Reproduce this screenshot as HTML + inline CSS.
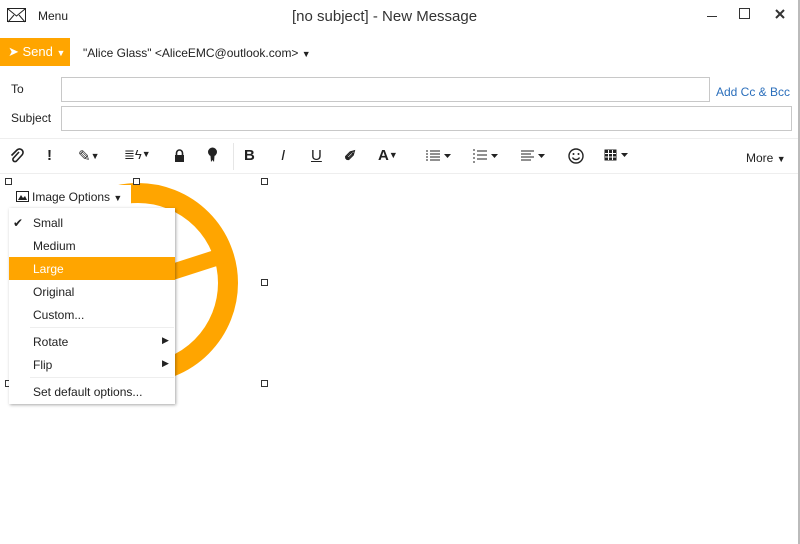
<!DOCTYPE html>
<html><head><style>
body{margin:0;width:800px;height:544px;background:#fff;font-family:"Liberation Sans",sans-serif;font-size:12px;color:#222;position:relative;overflow:hidden}
.a{position:absolute}
.inp{position:absolute;border:1px solid #c8c8c8;background:#fff}
.tb{position:absolute;top:147px;font-size:15px;font-weight:bold}
.mi{position:absolute;left:33px;font-size:12px}
.h{position:absolute;width:5px;height:5px;border:1px solid #333;background:#fff}
.dd{font-size:9px;font-weight:normal;vertical-align:2px}
</style></head><body>
<div class="a" style="right:0;top:0;width:2px;height:544px;background:#bbb"></div>
<svg class="a" style="left:7px;top:8px" width="20" height="15"><rect x="0.5" y="0.5" width="18" height="13" fill="none" stroke="#222"/><path d="M1 1L9.5 8L18 1M1 14L7 7M18 14L12 7" stroke="#222" fill="none"/></svg>
<div class="a" style="left:38px;top:9px;font-size:12px">Menu</div>
<div class="a" style="left:292px;top:8px;font-size:15px;color:#333">[no subject] - New Message</div>
<div class="a" style="left:707px;top:16px;width:10px;height:1px;background:#333"></div>
<div class="a" style="left:739px;top:8px;width:9px;height:9px;border:1px solid #333"></div>
<svg class="a" style="left:775px;top:9px" width="10" height="10"><path d="M1 1L9 9M9 1L1 9" stroke="#333" stroke-width="2"/></svg>
<div class="a" style="left:0;top:38px;width:70px;height:28px;background:#ffa500;color:#fff;font-size:13px;line-height:28px"><span style="margin-left:8px">➤ Send <span style="font-size:9px">▼</span></span></div>
<div class="a" style="left:83px;top:46px;font-size:12px">"Alice Glass" &lt;AliceEMC@outlook.com&gt; <span style="font-size:9px">▼</span></div>
<div class="a" style="left:11px;top:82px">To</div>
<div class="inp" style="left:61px;top:77px;width:647px;height:23px"></div>
<div class="a" style="left:716px;top:85px;color:#2a6ebb">Add Cc &amp; Bcc</div>
<div class="a" style="left:11px;top:111px">Subject</div>
<div class="inp" style="left:61px;top:106px;width:729px;height:23px"></div>
<div class="a" style="left:0;top:138px;width:798px;height:1px;background:#eee"></div>
<div class="a" style="left:0;top:173px;width:798px;height:1px;background:#eee"></div>
<div class="a" style="left:233px;top:143px;width:1px;height:27px;background:#e6e6e6"></div>
<svg class="a" style="left:10px;top:148px" width="14" height="16"><path d="M9 4L3.5 10a2 2 0 0 0 3 3L12 7a3.5 3.5 0 0 0-5-5L1.5 7.5" fill="none" stroke="#222" stroke-width="1.6"/></svg>
<div class="tb" style="left:47px">!</div>
<div class="tb" style="left:78px;font-weight:normal">✎<span class="dd">▼</span></div>
<div class="tb" style="left:124px;font-weight:normal;font-size:13px">≣ϟ<span class="dd">▼</span></div>
<svg class="a" style="left:174px;top:149px" width="11" height="13"><path d="M2.5 6V4a3 3 0 0 1 6 0v2" fill="none" stroke="#222" stroke-width="1.6"/><rect x="1" y="6" width="9" height="7" fill="#222"/></svg>
<svg class="a" style="left:207px;top:147px" width="11" height="16"><circle cx="5.5" cy="5" r="4.5" fill="#222"/><path d="M3.5 9L4 15L5.5 13L7 15L7.5 9" fill="#222"/></svg>
<div class="tb" style="left:244px">B</div>
<div class="tb" style="left:281px;font-style:italic;font-weight:normal">I</div>
<div class="tb" style="left:311px;text-decoration:underline;font-weight:normal">U</div>
<div class="tb" style="left:344px">✐</div>
<div class="tb" style="left:378px">A<span class="dd">▼</span></div>
<svg class="a" style="left:426px;top:150px" width="28" height="12"><path d="M0 1h2M4 1h10M0 4h2M4 4h10M0 7h2M4 7h10M0 10h2M4 10h10" stroke="#222"/><path d="M18 4h7l-3.5 4z" fill="#222"/></svg>
<svg class="a" style="left:473px;top:149px" width="28" height="14"><path d="M0 1h2M0 5h2M0 9h2M0 13h2M4 2h10M4 6h10M4 10h10" stroke="#222"/><path d="M18 5h7l-3.5 4z" fill="#222"/></svg>
<svg class="a" style="left:521px;top:150px" width="28" height="12"><path d="M0 1h13M0 4h10M0 7h13M0 10h10" stroke="#222"/><path d="M17 4h7l-3.5 4z" fill="#222"/></svg>
<svg class="a" style="left:568px;top:148px" width="16" height="16"><circle cx="8" cy="8" r="7" fill="none" stroke="#222" stroke-width="1.4"/><circle cx="5.5" cy="6" r="1" fill="#222"/><circle cx="10.5" cy="6" r="1" fill="#222"/><path d="M4.5 9.5a4 4 0 0 0 7 0" fill="none" stroke="#222" stroke-width="1.3"/></svg>
<svg class="a" style="left:604px;top:149px" width="28" height="13"><rect x="0.5" y="0.5" width="12" height="11" fill="#222"/><path d="M1 4.5h11M1 8h11M4.5 1v10M8.5 1v10" stroke="#fff"/><path d="M17 4h7l-3.5 4z" fill="#222"/></svg>
<div class="a" style="left:746px;top:151px;font-size:12px">More <span style="font-size:9px">▼</span></div>
<svg class="a" style="left:0;top:175px" width="280" height="220"><circle cx="138" cy="108" r="90" fill="none" stroke="#ffa500" stroke-width="20"/><path d="M138 108L225 80" stroke="#ffa500" stroke-width="16"/></svg>
<div class="h" style="left:5px;top:178px"></div><div class="h" style="left:133px;top:178px"></div><div class="h" style="left:261px;top:178px"></div>
<div class="h" style="left:261px;top:279px"></div><div class="h" style="left:5px;top:380px"></div><div class="h" style="left:261px;top:380px"></div>
<div class="a" style="left:9px;top:185px;width:122px;height:25px;background:#fff"></div>
<div class="a" style="left:9px;top:208px;width:166px;height:196px;background:#fff;box-shadow:1px 1px 3px rgba(0,0,0,.35)"></div>
<svg class="a" style="left:16px;top:191px" width="13" height="11"><rect x="0.5" y="0.5" width="12" height="10" fill="none" stroke="#222"/><path d="M2 9L5 4L7 7L9 5L11 9z" fill="#222"/></svg>
<div class="a" style="left:32px;top:190px;font-size:12px">Image Options <span style="font-size:9px">▼</span></div>
<div class="a" style="left:13px;top:216px">✔</div>
<div class="mi" style="top:216px">Small</div>
<div class="mi" style="top:239px">Medium</div>
<div class="a" style="left:9px;top:257px;width:166px;height:23px;background:#ffa500"></div>
<div class="mi" style="top:262px;color:#fff">Large</div>
<div class="mi" style="top:285px">Original</div>
<div class="mi" style="top:308px">Custom...</div>
<div class="a" style="left:30px;top:327px;width:144px;height:1px;background:#eee"></div>
<div class="mi" style="top:335px">Rotate</div><div class="a" style="left:162px;top:335px;font-size:9px">▶</div>
<div class="mi" style="top:358px">Flip</div><div class="a" style="left:162px;top:358px;font-size:9px">▶</div>
<div class="a" style="left:30px;top:377px;width:144px;height:1px;background:#eee"></div>
<div class="mi" style="top:385px">Set default options...</div>
</body></html>
